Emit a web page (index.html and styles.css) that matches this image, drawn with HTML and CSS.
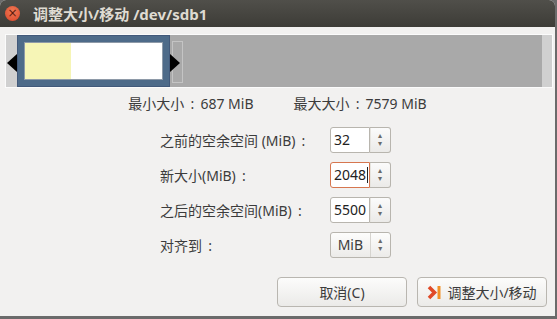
FILE: index.html
```html
<!DOCTYPE html>
<html lang="zh-CN">
<head>
  <meta charset="UTF-8">
  <meta name="viewport" content="width=device-width, initial-scale=1.0">
  <title>调整大小/移动 /dev/sdb1</title>
  <link rel="stylesheet" href="styles.css">
</head>
<body>
  <div class="window">
    <div class="titlebar">
      <span class="close">&times;</span>
      <span class="title">调整大小/移动 /dev/sdb1</span>
    </div>

    <div class="content">
      <div class="pbar">
        <div class="strip"></div>
        <div class="part">
          <div class="inner">
            <div class="used"></div>
          </div>
        </div>
        <div class="handle"></div>
        <div class="free"></div>
        <div class="strip end"></div>
        <span class="arrow left"></span>
        <span class="arrow right"></span>
      </div>

      <div class="limits">
        <span>最小大小<span class="sep">:</span>687 MiB</span>
        <span>最大大小<span class="sep">:</span>7579 MiB</span>
      </div>

      <div class="form">
        <label>之前的空余空间 (MiB)<span class="sep">:</span></label>
        <div class="spin">
          <div class="entry">32</div>
          <div class="btns"><span>&#9652;</span><span>&#9662;</span></div>
        </div>

        <label>新大小(MiB)<span class="sep">:</span></label>
        <div class="spin">
          <div class="entry focus">2048<i class="caret"></i></div>
          <div class="btns"><span>&#9652;</span><span>&#9662;</span></div>
        </div>

        <label>之后的空余空间(MiB)<span class="sep">:</span></label>
        <div class="spin">
          <div class="entry">5500</div>
          <div class="btns"><span>&#9652;</span><span>&#9662;</span></div>
        </div>

        <label>对齐到<span class="sep">:</span></label>
        <div class="combo">
          <div class="value">MiB</div>
          <div class="btns"><span>&#9652;</span><span>&#9662;</span></div>
        </div>
      </div>

      <div class="actions">
        <button class="btn">取消(C)</button>
        <button class="btn">
          <svg width="15" height="15" viewBox="0 0 15 15">
            <polyline points="2,2 7.5,7.5 2,13" fill="none" stroke="#e04a28" stroke-width="3.6" stroke-linejoin="miter"/>
            <rect x="10.5" y="1" width="3" height="13" fill="#f29026"/>
          </svg>
          调整大小/移动
        </button>
      </div>
    </div>
  </div>
</body>
</html>
```

FILE: styles.css
```css
body {
  margin: 0;
  background: #6b6b6b;
  font-family: "Noto Sans", "Noto Sans CJK SC", sans-serif;
  font-size: 14px;
  color: #3c3c3c;
}
.window {
  width: 555px;
  height: 316px;
  background: #f2f1f0;
  border-radius: 6px 6px 0 0;
  overflow: hidden;
}
.titlebar {
  height: 27px;
  display: flex;
  align-items: center;
  padding-left: 5px;
  background: linear-gradient(#504f4a, #3d3c37);
}
.close {
  width: 15px;
  height: 15px;
  border-radius: 50%;
  background: radial-gradient(circle at 50% 35%, #f07a55, #d9452a);
  color: #5a1a0c;
  font-size: 12px;
  line-height: 14px;
  text-align: center;
  font-family: "DejaVu Sans", sans-serif;
}
.title {
  margin-left: 13px;
  color: #dfdbd2;
  font-weight: bold;
  font-size: 15px;
}
.content {
  padding: 7px 0 0 5px;
}
.sep {
  display: inline-block;
  width: 1.15em;
  text-align: center;
}

.pbar {
  position: relative;
  width: 546px;
  height: 52px;
  border: 1px solid #fbfbfb;
  display: flex;
  background: #a9a9a9;
}
.strip {
  width: 11px;
  background: #d0d0d0;
}
.strip.end {
  width: 10px;
}
.part {
  width: 139px;
  padding: 7px;
  background: #4e6b89;
  box-shadow: inset 0 0 0 1px #42597a;
}
.inner {
  height: 100%;
  box-sizing: border-box;
  background: #fff;
  border: 1px solid #8e9aa8;
}
.used {
  width: 46px;
  height: 100%;
  background: #f6f5b6;
}
.handle {
  width: 9px;
  margin: 6px 0 4px 2px;
  border: 1px solid #c4c4c4;
}
.free {
  flex: 1;
}
.arrow {
  position: absolute;
  top: 19px;
  width: 0;
  height: 0;
  border-top: 9px solid transparent;
  border-bottom: 9px solid transparent;
}
.arrow.left {
  left: 1px;
  border-right: 10px solid #000;
}
.arrow.right {
  left: 164px;
  border-left: 10px solid #000;
}

.limits {
  display: flex;
  justify-content: center;
  gap: 40px;
  margin-top: 6px;
  padding-right: 5px;
  height: 20px;
  line-height: 20px;
}

.form {
  display: grid;
  grid-template-columns: 170px 61px;
  grid-auto-rows: 26px;
  row-gap: 9px;
  margin: 13px 0 0 155px;
  align-items: center;
}
.spin, .combo {
  display: flex;
  height: 26px;
}
.entry {
  width: 40px;
  box-sizing: border-box;
  background: #fff;
  border: 1px solid #b8b5ae;
  border-radius: 3px 0 0 3px;
  padding-left: 3px;
  line-height: 24px;
  font-size: 14px;
  color: #222;
  white-space: nowrap;
}
.entry.focus {
  border-color: #d6764f;
}
.caret {
  display: inline-block;
  width: 1px;
  height: 16px;
  margin-left: 1px;
  vertical-align: -3px;
  background: #222;
}
.btns {
  width: 21px;
  box-sizing: border-box;
  border: 1px solid #b8b5ae;
  border-left: 1px solid #dcdad5;
  border-radius: 0 3px 3px 0;
  background: linear-gradient(#fbfbfb, #ebeae8);
  display: flex;
  flex-direction: column;
  align-items: center;
  justify-content: center;
  color: #6a6a6a;
  font-size: 8px;
  line-height: 8px;
  font-family: "DejaVu Sans", sans-serif;
}
.spin .entry + .btns {
  border-left: none;
  box-shadow: inset 1px 0 0 #e6e4df;
}
.combo {
  box-sizing: border-box;
  border: 1px solid #b8b5ae;
  border-radius: 3px;
  background: linear-gradient(#fdfdfc, #ecebe9);
}
.combo .value {
  width: 40px;
  line-height: 24px;
  text-align: center;
  font-size: 14px;
}
.combo .btns {
  border: none;
  border-left: 1px solid #d6d4cf;
  background: none;
  height: 24px;
}

.actions {
  display: flex;
  justify-content: flex-end;
  gap: 10px;
  margin-top: 19px;
  padding-right: 8px;
}
.btn {
  width: 130px;
  height: 30px;
  display: flex;
  align-items: center;
  justify-content: center;
  gap: 5px;
  font-family: inherit;
  font-size: 14px;
  color: #3c3c3c;
  border: 1px solid #b9b6b0;
  border-radius: 4px;
  background: linear-gradient(#fcfcfb, #ebeae8);
}
```
